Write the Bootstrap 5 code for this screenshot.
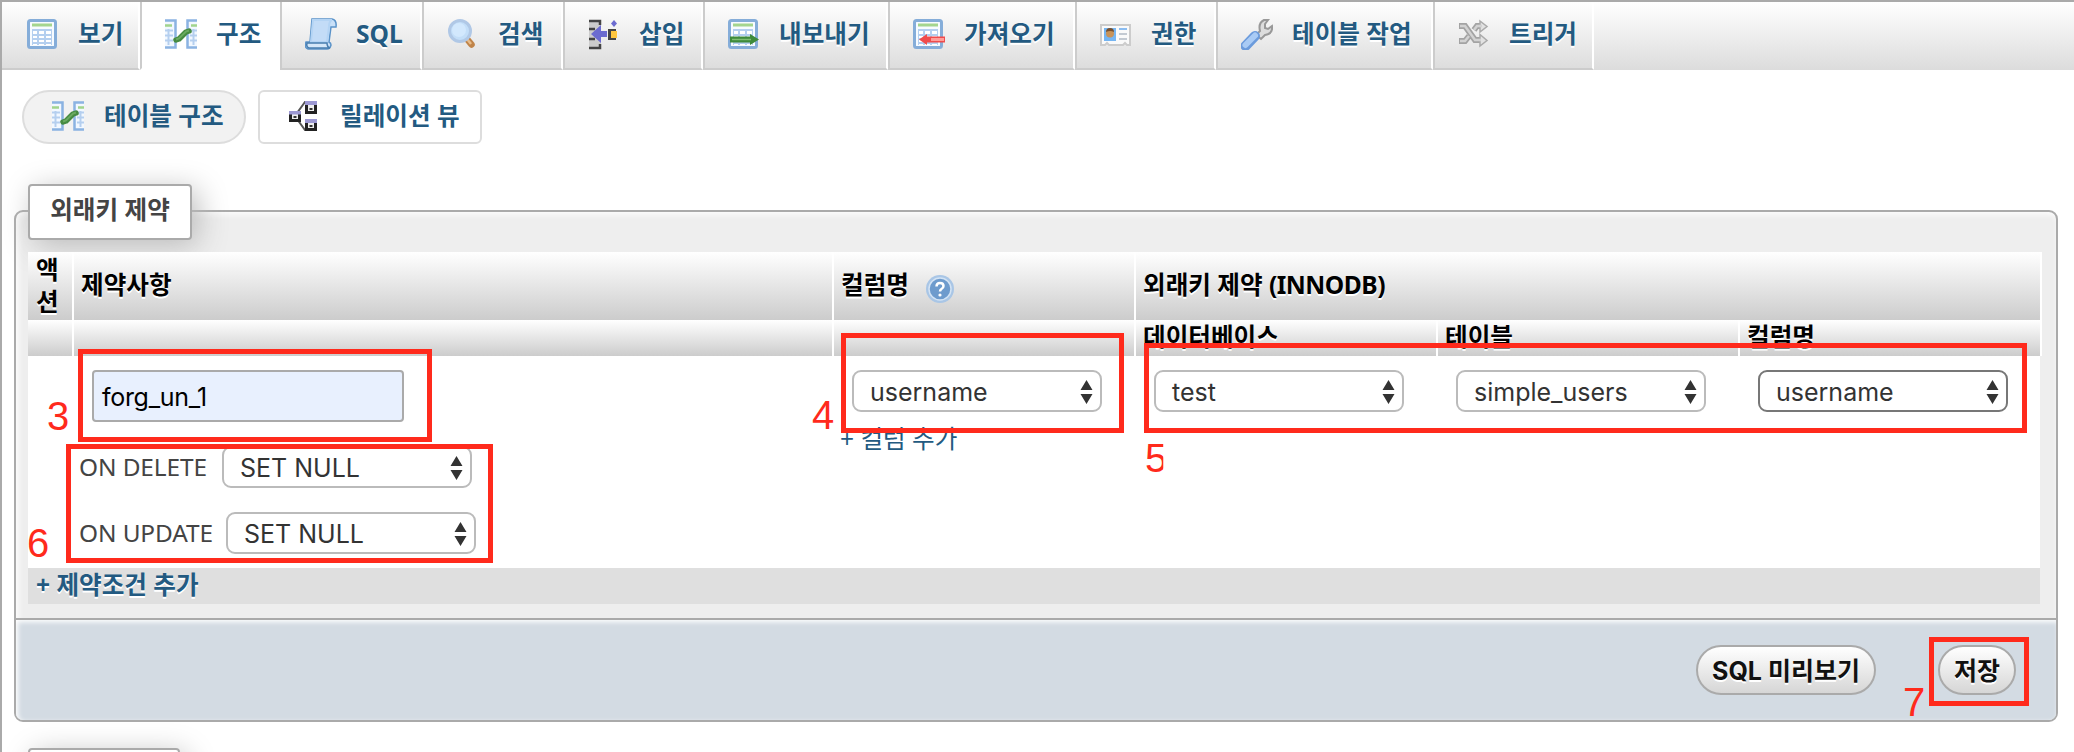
<!DOCTYPE html>
<html lang="ko">
<head>
<meta charset="utf-8">
<title>외래키 제약</title>
<link rel="stylesheet" href="https://cdn.jsdelivr.net/npm/bootstrap@5.3.0/dist/css/bootstrap.min.css">
<style>
:root{--link:#235a81;--line:#aaa;--red:#ff2a1c}
body{width:2074px;height:752px;overflow:hidden;background:#fff;color:#444;font-family:"Noto Sans","Noto Sans CJK KR",sans-serif;font-size:24.6px;line-height:32px}
.page-frame{height:752px;border-left:2px solid var(--line);border-top:2px solid var(--line);overflow:hidden}
a{color:var(--link);text-decoration:none}
.tabs{display:grid;grid-template-columns:138px 140px 142px 141px 140px 185px 187px 141px 217px 161px;height:68px;background:linear-gradient(#fff,#dcdcdc)}
.tabs a{padding:0 0 2px 23px;border-left:2px solid #ccc;border-right:2px solid #fff;border-bottom:2px solid #ccc;text-shadow:0 2px 0 #fff;font-weight:700;white-space:nowrap}
.tabs a:first-child{border-left:0;padding-left:25px}
.tabs a.active{background:#fff;border-right-color:#fff;border-bottom-color:#fff}
.tabs svg,.sub-tab svg{width:32px;height:32px;flex:none}
.tabs span{margin-left:19px}
.sub-tabs{padding:20px 0 0 20px;gap:12px}
.sub-tab{width:224px;height:54px;border:2px solid #ddd;border-radius:6px;padding:0 0 2px 28px;font-weight:700;white-space:nowrap}
.sub-tab.active{background:#f2f2f2;border-radius:27px}
.sub-tab span{margin-left:20px}
.panel{margin:66px 16px 0 12px;height:512px;border:2px solid var(--line);border-radius:9px;background:#eee;box-shadow:inset 2px 2px 6px #fff}
.panel-main{height:406px;padding:40px 14px 0 12px;position:relative}
.panel-legend{position:absolute;left:12px;top:-28px;width:164px;height:56px;border:2px solid var(--line);border-radius:4px;background:#fff;font-weight:700;box-shadow:6px 6px 30px #bbb;padding-bottom:4px}
.fk{display:grid;grid-template-columns:46px 760px 302px 302px 302px 302px;grid-template-rows:68px 36px 212px 36px;width:2014px}
.th-c{background:linear-gradient(#fff,#ccc);border-right:2px solid #fff;color:#000;font-weight:700;text-shadow:0 2px 0 #fff;padding:0 8px 3px 7px;display:flex;align-items:center;white-space:nowrap}
.th-c.act{white-space:normal;padding:0 7px 1px 8px}
.span3{grid-column:span 3}
.tight{letter-spacing:-.5px}
.td-c{background:#fff;padding:14px 8px 0}
.td-c.last{margin-right:2px}
.add-row{grid-column:1/-1;margin-right:2px;background:#dfdfdf;font-weight:700;text-shadow:0 2px 0 #fff;padding:1px 8px 0}
.pick{width:250px;height:42px;border:2px solid #bbb;border-radius:9px;background:#fff;color:#333;font-family:Inter,sans-serif;font-size:25px;padding:1px 7px 0 16px;display:flex;align-items:center;justify-content:space-between;line-height:30px}
.pick svg{width:13px;height:24px}
.td-c>.pick{margin-left:10px}
.pick.hot{border-color:#777}
.fk-name{width:312px;height:52px;border:2px solid var(--line);border-radius:4px;background:#e8f0fe;color:#000;font-family:Inter,sans-serif;font-size:25px;letter-spacing:-.3px;margin-left:10px;padding:2px 8px 0}
.rule{height:42px}
.lb-del,.lb-upd{font-size:24.4px;margin-left:-3px;width:143px;flex:none;white-space:nowrap;letter-spacing:-.1px}
.lb-upd{width:147px}
.add-col{margin:11px 0 0 -2px;display:block;line-height:32px}
.panel-foot{height:102px;border-top:2px solid var(--line);background:#d3dbe3;border-radius:0 0 7px 7px;box-shadow:inset 2px 2px 5px #fff;padding-right:40px;gap:62px}
.pill{height:50px;border:2px solid var(--line);border-radius:25px;background:linear-gradient(#fff,#d6d6d6);color:#111;font-family:Inter,"Noto Sans CJK KR",sans-serif;font-weight:700;font-size:25px;text-shadow:0 2px 0 #fff;padding:1px 0 0;width:78px;white-space:nowrap}
.pill.wide{width:180px}
.next-legend{width:152px;height:56px;margin:26px 0 0 26px;border:2px solid var(--line);border-radius:4px;box-shadow:6px 6px 30px #bbb}
/* numbered step markers over the form */
.step{position:absolute;border:5px solid var(--red)}
.num{position:absolute;color:var(--red);font:40px/48px "Liberation Sans",sans-serif}
.s3{left:78px;top:349px;width:354px;height:93px}.s6{left:66px;top:444px;width:427px;height:119px}
.s4{left:841px;top:333px;width:283px;height:100px}.s5{left:1144px;top:343px;width:883px;height:90px}
.s7{left:1929px;top:637px;width:100px;height:69px}
.n3{left:47px;top:392px}.n6{left:27px;top:519px}.n4{left:812px;top:391px}.n5{left:1145px;top:434px;clip-path:inset(0 4px 0 0)}.n7{left:1903px;top:678px}
</style>
</head>
<body>
<svg class="d-none">
<defs>
<symbol id="i-sheet" viewBox="0 0 32 32"><rect x="1.500" y="2.500" width="27" height="27" rx="2" fill="#f7fbff" stroke="#85add9" stroke-width="3"/><path d="M5 7h20" stroke="#a4d58e" stroke-width="3"/><path d="M5 11h20v16H5z" fill="#b4cfef"/><path d="M6 13h4v3H6zm6 0h5v3h-5zm7 0h5v3h-5zM6 18h4v2H6zm6 0h5v2h-5zm7 0h5v2h-5zM6 22h4v2H6zm6 0h5v2h-5zm7 0h5v2h-5zM6 26h4v1H6zm6 0h5v1h-5zm7 0h5v1h-5z" fill="#fff"/></symbol>
<symbol id="i-struct" viewBox="0 0 32 32"><path d="M0 2h10v28H0zM22 2h10v28H22z" fill="#f2f8ff"/><path d="M0 2.500h10.500v27H0M32 2.500h-9.500v27H32" fill="none" stroke="#8bb3e2" stroke-width="2.500"/><path d="M0 7.500h7M26 7.500h6" stroke="#a1d48d" stroke-width="2.500"/><path d="M0 12.500h8M0 17.500h8M0 22.500h8M25 12.500h7M25 17.500h7M25 22.500h7M3.500 11v16M28.500 11v16" stroke="#b5cfef" stroke-width="2"/><path d="M11 22l3-1 7-7 3-1" fill="none" stroke="#468b42" stroke-width="5.500" stroke-linecap="round" stroke-linejoin="round"/><path d="M11 21.500l3-1 7-7 3-1" fill="none" stroke="#6aaa60" stroke-width="2"/></symbol>
<symbol id="i-sql" viewBox="0 0 32 32"><path d="M7 1h20q5 1 4 8h-5l-2 15q2 1 2 3-1 4-4 4H3q-4-1-2-7h4z" fill="#c9e0f8" stroke="#5b93c9" stroke-width="1.500"/><path d="M8 2h19q-3 1-3 7l-2 15H6z" fill="#c3dcf7" stroke="#b4d4f4" stroke-width="2"/><path d="M2 25h20q0 4 3 5H4q-3-1-2-5z" fill="#d5e7f8" stroke="#477daf" stroke-width="1.500"/></symbol>
<symbol id="i-search" viewBox="0 0 32 32"><path d="M20 21l4.500 5.500" stroke="#c08449" stroke-width="6.500" stroke-linecap="round"/><path d="M20 21l4 5" stroke="#e8bd8b" stroke-width="2.500"/><circle cx="13" cy="13" r="10.500" fill="#c3def8" stroke="#b0c8e6" stroke-width="3"/><circle cx="12" cy="12" r="7" fill="#d2e8fd"/></symbol>
<symbol id="i-insert" viewBox="0 0 32 32"><path d="M1 2h12v28H1z" fill="#ccc"/><path d="M1 3h11v4M1 11h6M1 21h6M1 30h11v-4" fill="none" stroke="#444" stroke-width="2.500"/><path d="M3 16l10-9v6h6v6h-6v6z" fill="#6b6bd0"/><path d="M20 11h8v11h-8z" fill="#444"/><path d="M23 13h6v7h-6z" fill="#ffc63e"/><path d="M26 2l3 3.500-3 3.500-3-3.500z" fill="#6b6bd0"/></symbol>
<symbol id="i-priv" viewBox="0 0 32 32"><path d="M1 7h29v20h-3l-2-2-2 2H9l-2-2-2 2H1z" fill="#fafafa" stroke="#ccc" stroke-width="2"/><path d="M4 10h12v13H4z" fill="#75b5f2"/><circle cx="10" cy="15.500" r="4" fill="#c79258"/><path d="M6 14q0-4 4-4t4 4q-4-2-8 0" fill="#77502f"/><path d="M19 11h8" stroke="#8bbcf0" stroke-width="2"/><path d="M19 16h8M19 21h8" stroke="#c3cad2" stroke-width="2"/></symbol>
<symbol id="i-wrench" viewBox="0 0 32 32"><path d="M15 17l4-4q-2-8 4-11l4 0-3 4 0 4 3 1 4-3q1 8-7 9l-4 4z" fill="#ddd" stroke="#999" stroke-width="2"/><path d="M4.500 28L14 18" stroke="#6b9bdc" stroke-width="10" stroke-linecap="round"/><path d="M4.500 27L14 17.500" stroke="#a9cbf5" stroke-width="6" stroke-linecap="round"/></symbol>
<symbol id="i-trigger" viewBox="0 0 32 32"><g fill="none" stroke="#a3a3a3" stroke-width="6"><path d="M1 8h6l10 14h7M1 23h6l4-5M16 12l3-4h6"/></g><path d="M22 3l7 5.500-7 5.500zM22 16.500l7 6-7 5.500z" fill="#e2e2e2" stroke="#aaa" stroke-width="1.500"/><path d="M2 8h5l10 14h6M2 23h5l4-5M16 12l3-4h5" fill="none" stroke="#d2d2d2" stroke-width="2.500"/></symbol>
<symbol id="i-rel" viewBox="0 0 32 32"><path d="M9 13l8-11h4M9 19l8 11h4" fill="none" stroke="#555" stroke-width="2"/><g fill="#eee" stroke="#222" stroke-width="3"><path d="M2.500 12.500h9v8h-9zM18.500 3.500h9v9h-9zM18.500 21.500h9v8h-9z"/></g><path d="M1 11h12v3.500H1zM17 1h12v4H17zM17 19h12v4H17z" fill="#9c98d2"/><path d="M5.500 16h3v2h-3zM21.500 8h3v2h-3zM21.500 25h3v2h-3z" fill="#333"/></symbol>
<symbol id="i-arrows" viewBox="0 0 13 24"><path d="M6.500 0L12.500 10H.5zM.5 14h12l-6 10z" fill="#333"/></symbol>
</defs>
</svg>
<div class="page-frame">
<nav class="tabs">
<a href="#" class="d-flex align-items-center"><svg><use href="#i-sheet"/></svg><span>보기</span></a>
<a href="#" class="d-flex align-items-center active"><svg><use href="#i-struct"/></svg><span>구조</span></a>
<a href="#" class="d-flex align-items-center"><svg><use href="#i-sql"/></svg><span>SQL</span></a>
<a href="#" class="d-flex align-items-center"><svg><use href="#i-search"/></svg><span>검색</span></a>
<a href="#" class="d-flex align-items-center"><svg><use href="#i-insert"/></svg><span>삽입</span></a>
<a href="#" class="d-flex align-items-center"><svg viewBox="0 0 32 32"><use href="#i-sheet" width="32" height="32"/><path d="M2 18.500h20V16l9 5.500-9 5.500v-2.500H2z" fill="#3e8b3b"/><path d="M4 21.500h19" stroke="#7fbd72" stroke-width="1.500"/></svg><span>내보내기</span></a>
<a href="#" class="d-flex align-items-center"><svg viewBox="0 0 32 32"><use href="#i-sheet" width="32" height="32"/><path d="M32 18.500H14V16l-8 5.500 8 5.500v-2.500h18z" fill="#f04c4c"/><path d="M18 21.500h13" stroke="#ff9d99" stroke-width="3"/></svg><span>가져오기</span></a>
<a href="#" class="d-flex align-items-center"><svg><use href="#i-priv"/></svg><span>권한</span></a>
<a href="#" class="d-flex align-items-center"><svg><use href="#i-wrench"/></svg><span>테이블 작업</span></a>
<a href="#" class="d-flex align-items-center"><svg><use href="#i-trigger"/></svg><span>트리거</span></a>
</nav>
<div class="sub-tabs d-flex">
<a href="#" class="sub-tab active d-flex align-items-center"><svg><use href="#i-struct"/></svg><span>테이블 구조</span></a>
<a href="#" class="sub-tab d-flex align-items-center"><svg><use href="#i-rel"/></svg><span>릴레이션 뷰</span></a>
</div>
<section class="panel">
<div class="panel-main">
<div class="panel-legend d-flex align-items-center justify-content-center">외래키 제약</div>
<div class="fk position-relative">
<div class="th-c act">액션</div><div class="th-c">제약사항</div>
<div class="th-c">컬럼명<svg class="ms-3 mt-2" width="30" height="30" viewBox="0 0 30 30"><circle cx="15" cy="15" r="14" fill="#a9c6e6"/><circle cx="15" cy="15" r="11" fill="#6e9bcd" stroke="#d3e3f4" stroke-width="1.500"/><path d="M11.500 12.500q0-3.500 3.500-3.500t3.500 3q0 2-2 3-1.500 1-1.500 2.500" fill="none" stroke="#fff" stroke-width="2.500"/><circle cx="15" cy="21" r="1.600" fill="#fff"/></svg></div>
<div class="th-c span3"><span>외래키 제약 <span class="tight">(INNODB)</span></span></div>
<div class="th-c"></div><div class="th-c"></div><div class="th-c"></div><div class="th-c">데이터베이스</div><div class="th-c">테이블</div><div class="th-c">컬럼명</div>
<div class="td-c"></div>
<div class="td-c">
<div class="fk-name d-flex align-items-center">forg_un_1</div>
<div class="rule d-flex align-items-center mt-4"><span class="lb-del">ON DELETE</span><div class="pick">SET NULL<svg><use href="#i-arrows"/></svg></div></div>
<div class="rule d-flex align-items-center mt-4"><span class="lb-upd">ON UPDATE</span><div class="pick">SET NULL<svg><use href="#i-arrows"/></svg></div></div>
</div>
<div class="td-c"><div class="pick">username<svg><use href="#i-arrows"/></svg></div><a href="#" class="add-col">+ 컬럼 추가</a></div>
<div class="td-c"><div class="pick">test<svg><use href="#i-arrows"/></svg></div></div>
<div class="td-c"><div class="pick">simple_users<svg><use href="#i-arrows"/></svg></div></div>
<div class="td-c last"><div class="pick hot">username<svg><use href="#i-arrows"/></svg></div></div>
<div class="add-row"><a href="#">+ 제약조건 추가</a></div>
</div>
</div>
<div class="panel-foot d-flex align-items-center justify-content-end">
<button class="pill wide">SQL 미리보기</button><button class="pill">저장</button>
</div>
</section>
<div class="next-legend"></div>
</div>
<div class="step s3"></div><div class="step s4"></div><div class="step s5"></div><div class="step s6"></div><div class="step s7"></div>
<div class="num n3">3</div><div class="num n4">4</div><div class="num n5">5</div><div class="num n6">6</div><div class="num n7">7</div>
<script src="https://cdn.jsdelivr.net/npm/bootstrap@5.3.0/dist/js/bootstrap.bundle.min.js"></script>
</body>
</html>
